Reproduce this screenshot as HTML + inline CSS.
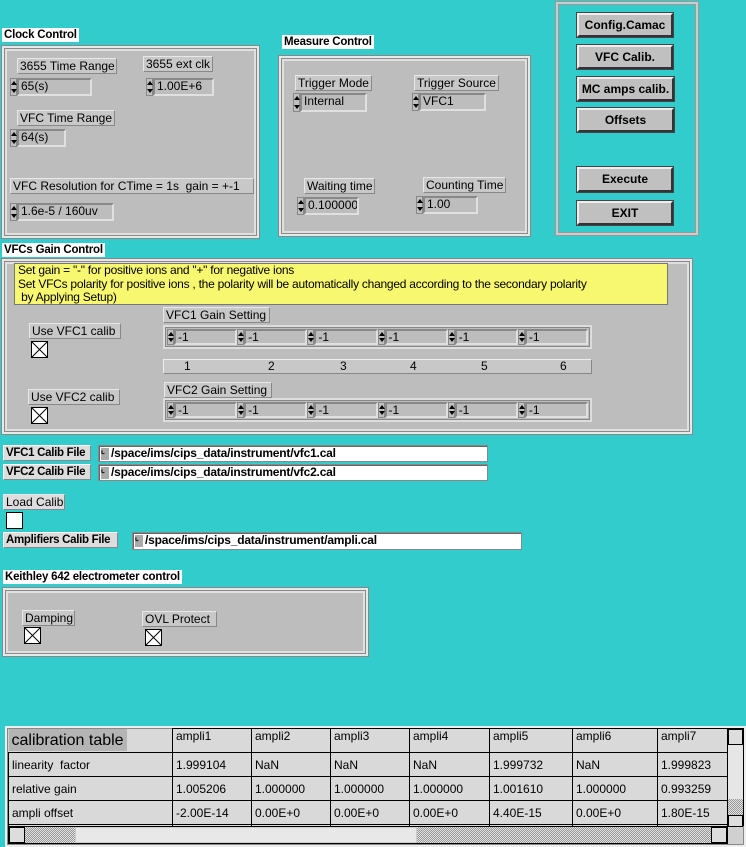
<!DOCTYPE html>
<html><head><meta charset="utf-8"><style>
*{box-sizing:border-box;margin:0;padding:0}
body{width:746px;height:847px;background:#33cccc;position:relative;overflow:hidden;font-family:"Liberation Sans",sans-serif;font-size:12px;color:#000}
.a{position:absolute}
.t{position:absolute;background:#fff;font-weight:bold;font-size:11.5px;line-height:14px;padding:0 2px;white-space:nowrap;letter-spacing:-0.2px}
.p{position:absolute;background:#bdbdbd;border:2px solid #e8e8e8;box-shadow:inset 0 0 0 1px #8a8a8a, inset 0 0 0 3px #e0e0e0,0 0 0 1px #888}
.l{position:absolute;background:#c8c8c8;border:1px solid #e8e8e8;border-right-color:#888;border-bottom-color:#888;font-size:12px;line-height:14px;padding:0 2px;white-space:nowrap}
.f{position:absolute;display:flex}
.g{position:relative;display:flex;flex:1;height:16px}
.s{width:7px;height:100%;background:#c0c0c0;border:1px solid #888;position:relative}
.s:before{content:"";position:absolute;left:0;top:2px;border:3px solid transparent;border-bottom:4px solid #000;border-top:0}
.s:after{content:"";position:absolute;left:0;bottom:2px;border:3px solid transparent;border-top:4px solid #000;border-bottom:0}
.v{flex:1;background:#bdbdbd;border:2px solid #e0e0e0;border-top-color:#888;border-left-color:#888;line-height:13px;padding-left:2px;font-size:12px;white-space:nowrap;overflow:hidden}
.cb{position:absolute;width:17px;height:17px;background:#fff;border:1px solid #000}
.cb svg{display:block}
.b{position:absolute;background:#c0c0c0;border:2px solid #eee;border-right-color:#333;border-bottom-color:#333;font-weight:bold;font-size:12px;text-align:center;line-height:20px;box-shadow:0 0 0 1px #444}
.fp{position:absolute;background:#fff;border:1px solid #888;box-shadow:inset 1px 1px 0 #666;font-weight:bold;font-size:12px;line-height:15px;padding-left:12px;letter-spacing:-0.2px}
.fp i{position:absolute;left:2px;top:2px;width:8px;height:12px;background:#aaa;font-style:normal;font-size:9px;line-height:12px}
.lb{position:absolute;background:#ddd;border:1px solid #fff;border-right-color:#888;border-bottom-color:#888;font-weight:bold;font-size:11.5px;line-height:14px;padding:0 2px;letter-spacing:-0.3px;white-space:nowrap}
table{border-collapse:collapse}
td{border:1px solid #000;height:24px;padding:0 3px;font-size:12px;background:#d9d9d9;white-space:nowrap}
.dot{background:repeating-conic-gradient(#999 0 25%,#e0e0e0 0 50%) 0 0/2px 2px}
</style></head><body>

<div class="t" style="left:2px;top:28px">Clock Control</div>
<div class="p" style="left:2px;top:46px;width:257px;height:192px"></div>
<div class="l" style="left:17px;top:58px;width:100px">3655 Time Range</div>
<div class="f" style="left:10px;top:78px;width:82px;height:18px"><div class="s"></div><div class="v">65(s)</div></div>
<div class="l" style="left:143px;top:56px;width:70px">3655 ext clk</div>
<div class="f" style="left:146px;top:78px;width:68px;height:18px"><div class="s"></div><div class="v">1.00E+6</div></div>
<div class="l" style="left:17px;top:110px;width:98px">VFC Time Range</div>
<div class="f" style="left:10px;top:129px;width:56px;height:18px"><div class="s"></div><div class="v">64(s)</div></div>
<div class="l" style="left:10px;top:178px;width:244px">VFC Resolution for CTime = 1s&nbsp; gain = +-1</div>
<div class="f" style="left:10px;top:203px;width:104px;height:18px"><div class="s"></div><div class="v">1.6e-5 / 160uv</div></div>

<div class="t" style="left:282px;top:35px">Measure Control</div>
<div class="p" style="left:279px;top:56px;width:251px;height:180px"></div>
<div class="l" style="left:295px;top:75px;width:77px">Trigger Mode</div>
<div class="f" style="left:293px;top:93px;width:74px;height:19px"><div class="s"></div><div class="v">Internal</div></div>
<div class="l" style="left:414px;top:75px;width:85px">Trigger Source</div>
<div class="f" style="left:412px;top:93px;width:74px;height:18px"><div class="s"></div><div class="v">VFC1</div></div>
<div class="l" style="left:304px;top:178px;width:71px">Waiting time</div>
<div class="f" style="left:297px;top:197px;width:62px;height:18px"><div class="s"></div><div class="v">0.100000</div></div>
<div class="l" style="left:423px;top:177px;width:83px">Counting Time</div>
<div class="f" style="left:416px;top:196px;width:62px;height:18px"><div class="s"></div><div class="v">1.00</div></div>

<div class="a" style="left:556px;top:2px;width:142px;height:233px;border:2px solid #ccc;box-shadow:0 0 0 1px #999,inset 0 0 0 1px #999"></div>
<div class="b" style="left:577px;top:13px;width:96px;height:24px">Config.Camac</div>
<div class="b" style="left:577px;top:45px;width:96px;height:24px">VFC Calib.</div>
<div class="b" style="left:577px;top:77px;width:97px;height:24px">MC amps calib.</div>
<div class="b" style="left:577px;top:108px;width:97px;height:24px">Offsets</div>
<div class="b" style="left:577px;top:167px;width:96px;height:25px">Execute</div>
<div class="b" style="left:577px;top:201px;width:96px;height:24px">EXIT</div>

<div class="t" style="left:2px;top:243px">VFCs Gain Control</div>
<div class="p" style="left:2px;top:259px;width:690px;height:175px"></div>
<div class="a" style="left:14px;top:263px;width:654px;height:42px;background:#f8f870;border:1px solid #777;font-size:12px;line-height:13.5px;padding-left:3px;letter-spacing:-0.25px">Set gain = "-" for positive ions and "+" for negative ions<br>Set VFCs polarity for positive ions , the polarity will be automatically changed according to the secondary polarity<br>&nbsp;by Applying Setup)</div>
<div class="l" style="left:163px;top:307px;width:107px">VFC1 Gain Setting</div>
<div class="l" style="left:29px;top:323px;width:92px">Use VFC1 calib</div>
<div class="cb" style="left:31px;top:341px"><svg width="15" height="15"><path d="M0 0L15 15M15 0L0 15" stroke="#000"/></svg></div>
<div class="a" style="left:163px;top:325px;width:429px;height:24px;border:2px solid #ddd;box-shadow:inset 0 0 0 1px #888;display:flex;padding:2px 2px">
<div class="g"><div class="s"></div><div class="v">-1</div></div><div class="g"><div class="s"></div><div class="v">-1</div></div><div class="g"><div class="s"></div><div class="v">-1</div></div><div class="g"><div class="s"></div><div class="v">-1</div></div><div class="g"><div class="s"></div><div class="v">-1</div></div><div class="g"><div class="s"></div><div class="v">-1</div></div></div>
<div class="a" style="left:163px;top:359px;width:429px;height:15px;background:#c8c8c8;border:1px solid #eee;border-right-color:#888;border-bottom-color:#888;font-size:12px;line-height:13px">
<span class="a" style="left:20px">1</span><span class="a" style="left:104px">2</span><span class="a" style="left:176px">3</span><span class="a" style="left:246px">4</span><span class="a" style="left:317px">5</span><span class="a" style="left:396px">6</span></div>
<div class="l" style="left:164px;top:382px;width:108px">VFC2 Gain Setting</div>
<div class="l" style="left:28px;top:389px;width:92px">Use VFC2 calib</div>
<div class="cb" style="left:31px;top:407px"><svg width="15" height="15"><path d="M0 0L15 15M15 0L0 15" stroke="#000"/></svg></div>
<div class="a" style="left:163px;top:398px;width:429px;height:24px;border:2px solid #ddd;box-shadow:inset 0 0 0 1px #888;display:flex;padding:2px 2px">
<div class="g"><div class="s"></div><div class="v">-1</div></div><div class="g"><div class="s"></div><div class="v">-1</div></div><div class="g"><div class="s"></div><div class="v">-1</div></div><div class="g"><div class="s"></div><div class="v">-1</div></div><div class="g"><div class="s"></div><div class="v">-1</div></div><div class="g"><div class="s"></div><div class="v">-1</div></div></div>

<div class="lb" style="left:3px;top:445px;width:88px">VFC1 Calib File</div>
<div class="fp" style="left:98px;top:445px;width:390px;height:17px"><i>ᒡ</i>/space/ims/cips_data/instrument/vfc1.cal</div>
<div class="lb" style="left:3px;top:464px;width:88px">VFC2 Calib File</div>
<div class="fp" style="left:98px;top:464px;width:390px;height:17px"><i>ᒡ</i>/space/ims/cips_data/instrument/vfc2.cal</div>
<div class="l" style="left:3px;top:494px;width:62px;background:#ddd">Load Calib</div>
<div class="cb" style="left:6px;top:512px"></div>
<div class="lb" style="left:3px;top:532px;width:115px">Amplifiers Calib File</div>
<div class="fp" style="left:132px;top:532px;width:390px;height:18px"><i>ᒡ</i>/space/ims/cips_data/instrument/ampli.cal</div>

<div class="t" style="left:3px;top:570px">Keithley 642 electrometer control</div>
<div class="p" style="left:3px;top:588px;width:365px;height:68px"></div>
<div class="l" style="left:22px;top:610px;width:53px">Damping</div>
<div class="cb" style="left:24px;top:627px"><svg width="15" height="15"><path d="M0 0L15 15M15 0L0 15" stroke="#000"/></svg></div>
<div class="l" style="left:142px;top:611px;width:75px">OVL Protect</div>
<div class="cb" style="left:145px;top:629px"><svg width="15" height="15"><path d="M0 0L15 15M15 0L0 15" stroke="#000"/></svg></div>

<div class="a" style="left:5px;top:726px;width:741px;height:121px;background:#d0d0d0;border:2px solid #eee;box-shadow:inset 0 0 0 1px #888;overflow:hidden">
<div class="a" style="left:1px;top:0;width:720px;height:100px;overflow:hidden">
<table style="position:absolute;left:0;top:0;width:760px">
<tr><td style="width:164px;border:none;background:#d9d9d9;padding:0;height:22px"><div style="width:118px;height:22px;background:#b4b4b4;font-size:16px;line-height:24px;padding-left:3px">calibration table</div></td><td style="width:79px;vertical-align:top">ampli1</td><td style="width:79px;vertical-align:top">ampli2</td><td style="width:79px;vertical-align:top">ampli3</td><td style="width:80px;vertical-align:top">ampli4</td><td style="width:83px;vertical-align:top">ampli5</td><td style="width:85px;vertical-align:top">ampli6</td><td style="vertical-align:top">ampli7</td></tr>
<tr><td>linearity&nbsp; factor</td><td>1.999104</td><td>NaN</td><td>NaN</td><td>NaN</td><td>1.999732</td><td>NaN</td><td>1.999823</td></tr>
<tr><td>relative gain</td><td>1.005206</td><td>1.000000</td><td>1.000000</td><td>1.000000</td><td>1.001610</td><td>1.000000</td><td>0.993259</td></tr>
<tr><td>ampli offset</td><td>-2.00E-14</td><td>0.00E+0</td><td>0.00E+0</td><td>0.00E+0</td><td>4.40E-15</td><td>0.00E+0</td><td>1.80E-15</td></tr>
<tr><td>&nbsp;</td><td></td><td></td><td></td><td></td><td></td><td></td><td></td></tr>
</table></div>
<div class="a dot" style="left:1px;top:98px;width:720px;height:18px;border:1px solid #000">
<div class="a" style="left:0;top:0;width:16px;height:16px;border:1px solid #000;background:#ddd"></div>
<div class="a" style="left:66px;top:0;width:342px;height:16px;background:#e8e8e8;border:1px solid #ccc"></div>
<div class="a" style="right:0;top:0;width:16px;height:16px;border:1px solid #000;background:#ddd"></div></div>
<div class="a" style="left:720px;top:0;width:17px;height:98px;background:#e6e6e6;border:1px solid #000">
<div class="a" style="left:0;top:0;width:15px;height:16px;border:1px solid #000;background:#ddd"></div>
<div class="a dot" style="left:0;top:70px;width:15px;height:18px"></div>
<div class="a" style="left:0;top:86px;width:15px;height:12px;border:1px solid #000;background:#ddd"></div></div>
</div>
</body></html>
